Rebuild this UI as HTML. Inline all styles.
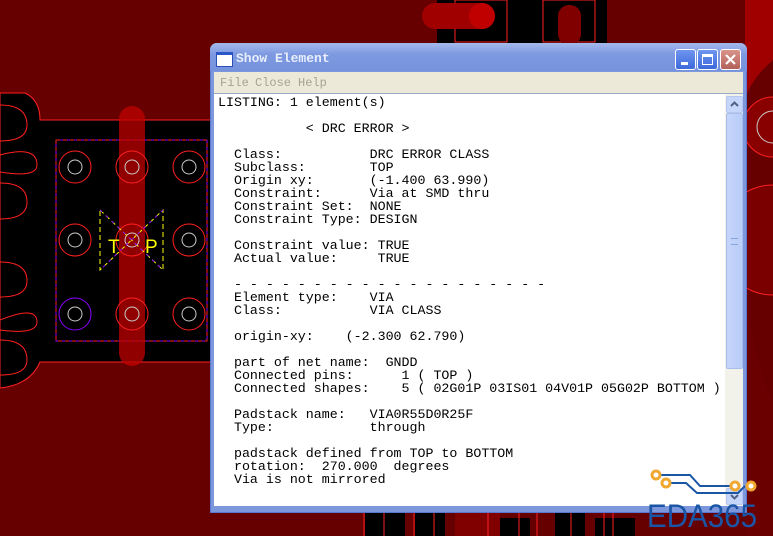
<!DOCTYPE html>
<html><head><meta charset="utf-8"><style>
*{margin:0;padding:0}
body{width:773px;height:536px;overflow:hidden;background:#660000;position:relative;font-family:"Liberation Sans",sans-serif}
#bg{position:absolute;left:0;top:0}
.win{position:absolute;left:210px;top:43px;width:537px;height:470px;background:#7d97dd;border-radius:7px 7px 0 0;box-shadow:inset 0 0 0 1px #5a78d0}
.title{position:absolute;left:0;top:0;width:537px;height:28px;border-radius:7px 7px 0 0;background:linear-gradient(#a4b9ec,#7d99e0 40%,#7592dc)}
.title .ic{position:absolute;left:6px;top:9px;width:15px;height:11px;background:#fff;border:1px solid #2a4fb8;border-top:3px solid #2a56c8}
.title .t{position:absolute;left:26px;top:8px;color:#e8eefc;font:bold 13px "Liberation Mono",monospace}
.btn{position:absolute;top:6px;width:19px;height:19px;border:1px solid #fff;border-radius:3px;background:linear-gradient(#6f95ee,#3c69dc)}
.menu{position:absolute;left:4px;top:29px;width:529px;height:21px;background:#ece9d8;border-bottom:1px solid #9aa9c4;font:12px "Liberation Mono",monospace;color:#a6a394}
.menu span{position:absolute;top:4px}
.content{position:absolute;left:4px;top:51px;width:511px;height:412px;background:#fff}
pre{position:absolute;left:4px;top:2px;font:13.3px/13px "Liberation Mono",monospace;color:#000}
.sb{position:absolute;left:515px;top:51px;width:18px;height:412px;background:#f3f2ea}
.arr{position:absolute;left:1px;width:15px;height:15px;border:1px solid #b5c7ef;border-radius:2px;background:#c5d6fa}
.thumb{position:absolute;left:1px;top:19px;width:15px;height:254px;border:1px solid #a8bde8;border-radius:2px;background:linear-gradient(90deg,#c6d5fa,#b8cdf8)}
</style></head><body>
<svg id="bg" width="773" height="536">
<rect width="773" height="536" fill="#660000"/>
<path d="M745 0 L773 0 L773 60 Q750 80 745 100Z" fill="#a00000"/>
<circle cx="773" cy="127" r="30" fill="#880000" stroke="#ff2020"/>
<circle cx="773" cy="127" r="16" fill="none" stroke="#ccc"/>
<circle cx="773" cy="240" r="55" fill="#7a0000" stroke="#ff2020"/>
<path d="M745 300 Q760 380 773 400 L773 536 L747 536Z" fill="#6a0000"/>
<!-- top -->
<rect x="437" y="0" width="170" height="43" fill="#000"/>
<rect x="455" y="0" width="52" height="42" fill="none" stroke="#ff2020"/>
<rect x="543" y="0" width="52" height="42" fill="none" stroke="#ff2020"/>
<rect x="422" y="3" width="73" height="26" rx="13" fill="#a00000"/>
<rect x="469" y="3" width="26" height="26" rx="13" fill="#c00000"/>
<rect x="558" y="5" width="23" height="40" rx="11" fill="#800000"/>
<!-- left board -->
<path d="M0 93 L25 93 Q40 100 40 120 L260 120 L260 362 L40 362 Q30 385 0 388Z" fill="#000" stroke="#ff2020"/>
<path d="M0 105 Q27 105 27 125 Q27 141 0 141 M0 155 Q37 145 37 165 Q37 178 0 172 M0 183 Q27 183 27 202 Q27 219 0 219 M0 262 Q27 262 27 281 Q27 297 0 297 M0 320 Q37 305 37 322 Q37 335 0 330 M0 340 Q27 340 27 360 Q27 375 0 375" fill="none" stroke="#ff2020"/>
<rect x="56" y="140" width="151" height="201" fill="none" stroke="#ff2020" stroke-dasharray="4 3"/>
<rect x="56" y="140" width="151" height="201" fill="none" stroke="#8a00ff" stroke-dasharray="3 4" stroke-dashoffset="3"/>
<rect x="119" y="106" width="26" height="260" rx="13" fill="#c00000" opacity=".75"/>
<g fill="none">
<circle cx="75" cy="167" r="16" stroke="#ff2020"/><circle cx="75" cy="167" r="7" stroke="#ccc"/>
<circle cx="132" cy="167" r="16" stroke="#ff2020"/><circle cx="132" cy="167" r="7" stroke="#ccc"/>
<circle cx="189" cy="167" r="16" stroke="#ff2020"/><circle cx="189" cy="167" r="7" stroke="#ccc"/>
<circle cx="75" cy="240" r="16" stroke="#ff2020"/><circle cx="75" cy="240" r="7" stroke="#ccc"/>
<circle cx="132" cy="240" r="16" stroke="#ff2020"/><circle cx="132" cy="240" r="7" stroke="#ccc"/>
<circle cx="189" cy="240" r="16" stroke="#ff2020"/><circle cx="189" cy="240" r="7" stroke="#ccc"/>
<circle cx="75" cy="314" r="16" stroke="#8a00ff"/><circle cx="75" cy="314" r="7" stroke="#ccc"/>
<circle cx="132" cy="314" r="16" stroke="#ff2020"/><circle cx="132" cy="314" r="7" stroke="#ccc"/>
<circle cx="189" cy="314" r="16" stroke="#ff2020"/><circle cx="189" cy="314" r="7" stroke="#ccc"/>
<path d="M100 210 L163 270 L163 210 L100 270Z" stroke="#ffff00" stroke-dasharray="5 3"/>
<path d="M100 210 L163 270 M163 210 L100 270" stroke="#8a00ff" stroke-dasharray="3 5"/>
</g>
<text x="108" y="253" fill="#ffff00" font-family="Liberation Sans" font-size="19">T</text>
<text x="145" y="253" fill="#ffff00" font-family="Liberation Sans" font-size="19">P</text>
<!-- bottom strip -->
<rect x="365" y="512" width="40" height="24" fill="#000"/><rect x="415" y="512" width="30" height="24" fill="#000"/>
<rect x="455" y="512" width="45" height="24" fill="#800000"/><rect x="500" y="518" width="30" height="18" fill="#000"/>
<rect x="555" y="512" width="30" height="24" fill="#000"/><rect x="595" y="518" width="40" height="18" fill="#000"/>
<g stroke="#ff2020"><line x1="364" y1="512" x2="364" y2="536"/><line x1="384" y1="512" x2="384" y2="536"/><line x1="414" y1="512" x2="414" y2="536"/><line x1="434" y1="512" x2="434" y2="536"/><line x1="488" y1="512" x2="488" y2="536"/><line x1="519" y1="512" x2="519" y2="536"/><line x1="537" y1="512" x2="537" y2="536"/><line x1="571" y1="512" x2="571" y2="536"/><line x1="604" y1="512" x2="604" y2="536"/><line x1="613" y1="512" x2="613" y2="536"/></g>
</svg>
<div class="win">
<div class="title"><div class="ic"></div><div class="t">Show Element</div>
<div class="btn" style="left:465px"><div style="position:absolute;left:5px;top:12px;width:7px;height:3px;background:#fff"></div></div>
<div class="btn" style="left:487px"><div style="position:absolute;left:4px;top:4px;width:9px;height:7px;border:1.5px solid #fff;border-top-width:3px"></div></div>
<div class="btn" style="left:510px;background:linear-gradient(#d9948c,#b2605a)"><svg width="19" height="19"><path d="M5 5L14 14M14 5L5 14" stroke="#fff" stroke-width="2.2"/></svg></div>
</div>
<div class="menu"><span style="left:6px">File</span><span style="left:41px">Close</span><span style="left:84px">Help</span></div>
<div class="content"><pre>LISTING: 1 element(s)

           &lt; DRC ERROR &gt;

  Class:           DRC ERROR CLASS
  Subclass:        TOP
  Origin xy:       (-1.400 63.990)
  Constraint:      Via at SMD thru
  Constraint Set:  NONE
  Constraint Type: DESIGN

  Constraint value: TRUE
  Actual value:     TRUE

  - - - - - - - - - - - - - - - - - - - -
  Element type:    VIA
  Class:           VIA CLASS

  origin-xy:    (-2.300 62.790)

  part of net name:  GNDD
  Connected pins:      1 ( TOP )
  Connected shapes:    5 ( 02G01P 03IS01 04V01P 05G02P BOTTOM )

  Padstack name:   VIA0R55D0R25F
  Type:            through

  padstack defined from TOP to BOTTOM
  rotation:  270.000  degrees
  Via is not mirrored</pre></div>
<div class="sb"><div class="arr" style="top:2px"><svg width="15" height="15"><path d="M4 9L7.5 5.5L11 9" fill="none" stroke="#4d6185" stroke-width="2"/></svg></div><div class="thumb"><div style="position:absolute;left:4px;top:124px;width:7px;height:5px;border-top:1px solid #8aa4e0;border-bottom:1px solid #8aa4e0"></div></div><div class="arr" style="top:394px"><svg width="15" height="15"><path d="M4 6L7.5 9.5L11 6" fill="none" stroke="#4d6185" stroke-width="2"/></svg></div></div>
</div>
<svg style="position:absolute;left:640px;top:460px" width="133" height="76">
<path d="M16 15 L50 15 L60 26 L92 26 M23 23 L46 23 L57 33 L98 33 L105 26" fill="none" stroke="#1a55a6" stroke-width="2"/>
<g fill="#fff" stroke="#f0a830" stroke-width="3"><circle cx="16" cy="15" r="4"/><circle cx="26" cy="23" r="4"/><circle cx="95" cy="26" r="4"/><circle cx="111" cy="26" r="4"/></g>
<text x="7" y="67" fill="#1a55a6" font-family="Liberation Sans" font-size="32" textLength="110" lengthAdjust="spacingAndGlyphs">EDA365</text>
</svg>
</body></html>
